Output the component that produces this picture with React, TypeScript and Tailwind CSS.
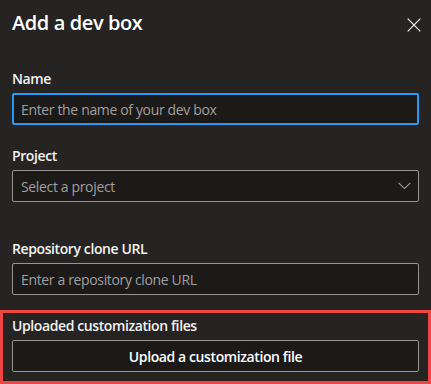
import { FC } from "react";

const font = { fontFamily: '"Segoe UI", "Open Sans", "Noto Sans", sans-serif' };

interface FieldProps {
  label: string;
  placeholder: string;
  focused?: boolean;
  select?: boolean;
}

const Field: FC<FieldProps> = ({ label, placeholder, focused, select }) => {
  return (
    <div className="flex flex-col">
      <label className="h-[29px] pt-[5px] text-[14px] font-semibold leading-[19px] tracking-[-0.4px] text-[#f3f2f1]">
        {label}
      </label>
      <div
        className={`relative flex h-8 items-center rounded-[2px] bg-[#1b1a19] ${
          focused ? "border-2 border-[#2899f5] pl-[7px]" : "border border-[#979593] pl-2"
        }`}
      >
        <span className="text-[14px] tracking-[-0.35px] text-[#a19f9d]">{placeholder}</span>
        {select && (
          <svg
            className="absolute right-[7px] top-[11px]"
            width="13"
            height="8"
            viewBox="0 0 13 8"
            fill="none"
          >
            <path d="M0.6 0.8 L6.5 6.6 L12.4 0.8" stroke="#a19f9d" strokeWidth="1.1" />
          </svg>
        )}
      </div>
    </div>
  );
};

export default function App() {
  return (
    <div className="h-[384px] w-[431px] overflow-hidden bg-[#252423]" style={font}>
      <div className="flex h-[48px] items-start justify-between pl-3 pr-[10px] pt-[9px]">
        <h1 className="text-[20px] font-semibold leading-[28px] tracking-[-0.4px] text-white">
          Add a dev box
        </h1>
        <button className="mt-[8px] flex h-[15px] w-[15px] items-center justify-center">
          <svg width="14" height="14" viewBox="0 0 14 14" fill="none">
            <path d="M0.7 0.7 L13.3 13.3 M13.3 0.7 L0.7 13.3" stroke="#f3f2f1" strokeWidth="1.2" />
          </svg>
        </button>
      </div>

      <div className="flex flex-col px-3 pt-4">
        <Field label="Name" placeholder="Enter the name of your dev box" focused />
        <div className="mt-4">
          <Field label="Project" placeholder="Select a project" select />
        </div>
        <div className="mt-8">
          <Field label="Repository clone URL" placeholder="Enter a repository clone URL" />
        </div>
      </div>

      <div className="mt-[15px] h-[74px] border-[3px] border-[#f04545] px-[9px]">
        <div className="h-[27px] pt-[3px] text-[14px] font-semibold leading-[19px] tracking-[-0.4px] text-[#f3f2f1]">
          Uploaded customization files
        </div>
        <button className="flex h-8 w-full items-center justify-center rounded-[2px] border border-[#979593] bg-[#1b1a19] text-[14px] font-semibold tracking-[-0.4px] text-white">
          Upload a customization file
        </button>
      </div>
    </div>
  );
}
